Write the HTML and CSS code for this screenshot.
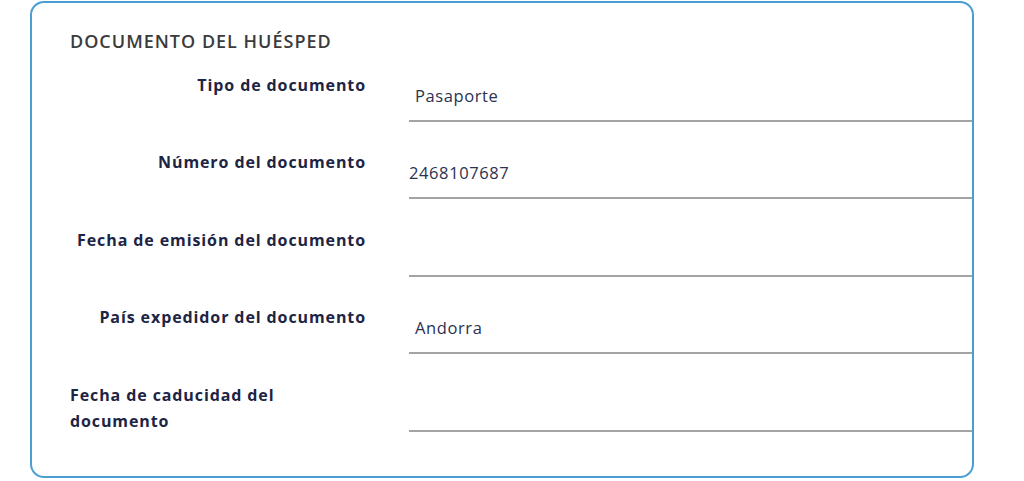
FILE: index.html
```html
<!DOCTYPE html>
<html lang="es">
<head>
<meta charset="utf-8">
<title>Documento del huésped</title>
<link rel="stylesheet" href="styles.css">
</head>
<body>
<div class="page">
  <section class="card">
    <h2 class="card-title">DOCUMENTO DEL HUÉSPED</h2>
    <div class="rows">
      <div class="row">
        <div class="label-cell"><span class="label">Tipo de documento</span></div>
        <div class="field select"><span class="value">Pasaporte</span></div>
      </div>
      <div class="row">
        <div class="label-cell"><span class="label">Número del documento</span></div>
        <div class="field"><span class="value">2468107687</span></div>
      </div>
      <div class="row">
        <div class="label-cell"><span class="label">Fecha de emisión del documento</span></div>
        <div class="field"><span class="value"></span></div>
      </div>
      <div class="row">
        <div class="label-cell"><span class="label">País expedidor del documento</span></div>
        <div class="field select"><span class="value">Andorra</span></div>
      </div>
      <div class="row">
        <div class="label-cell"><span class="label">Fecha de caducidad del documento</span></div>
        <div class="field"><span class="value"></span></div>
      </div>
    </div>
  </section>
</div>
</body>
</html>
```

FILE: styles.css
```css
html, body {
  margin: 0;
  padding: 0;
  background: #ffffff;
}

.page {
  padding: 1px 0 0 30px;
  width: 944px;
}

.card {
  box-sizing: border-box;
  width: 944px;
  height: 477px;
  border: 2px solid #4a9fd2;
  border-radius: 14px;
  padding: 26px 0 0 38px;
  overflow: hidden;
  font-family: "Open Sans", "Liberation Sans", sans-serif;
}

.card-title {
  margin: 0;
  font-size: 18px;
  line-height: 24px;
  font-weight: 600;
  letter-spacing: 1px;
  color: #3b3b3b;
}

.rows {
  display: flex;
  flex-direction: column;
  gap: 10.5px;
  margin-top: 1.5px;
}

.row {
  display: grid;
  grid-template-columns: 296px 1fr;
  grid-template-rows: 67px;
  column-gap: 43px;
  height: 67px;
}

.label-cell {
  display: flex;
  justify-content: flex-end;
  align-items: flex-start;
  padding-top: 17px;
}

.label {
  font-size: 16px;
  line-height: 26px;
  font-weight: 700;
  letter-spacing: 0.9px;
  color: #1d2444;
}

.field {
  display: flex;
  align-items: flex-end;
  border-bottom: 2px solid #a3a3a3;
  padding-bottom: 12px;
}

.value {
  font-size: 16.5px;
  line-height: 24px;
  letter-spacing: 0.6px;
  color: #2b3150;
  min-height: 24px;
}

.select .value {
  padding-left: 6px;
}
```
